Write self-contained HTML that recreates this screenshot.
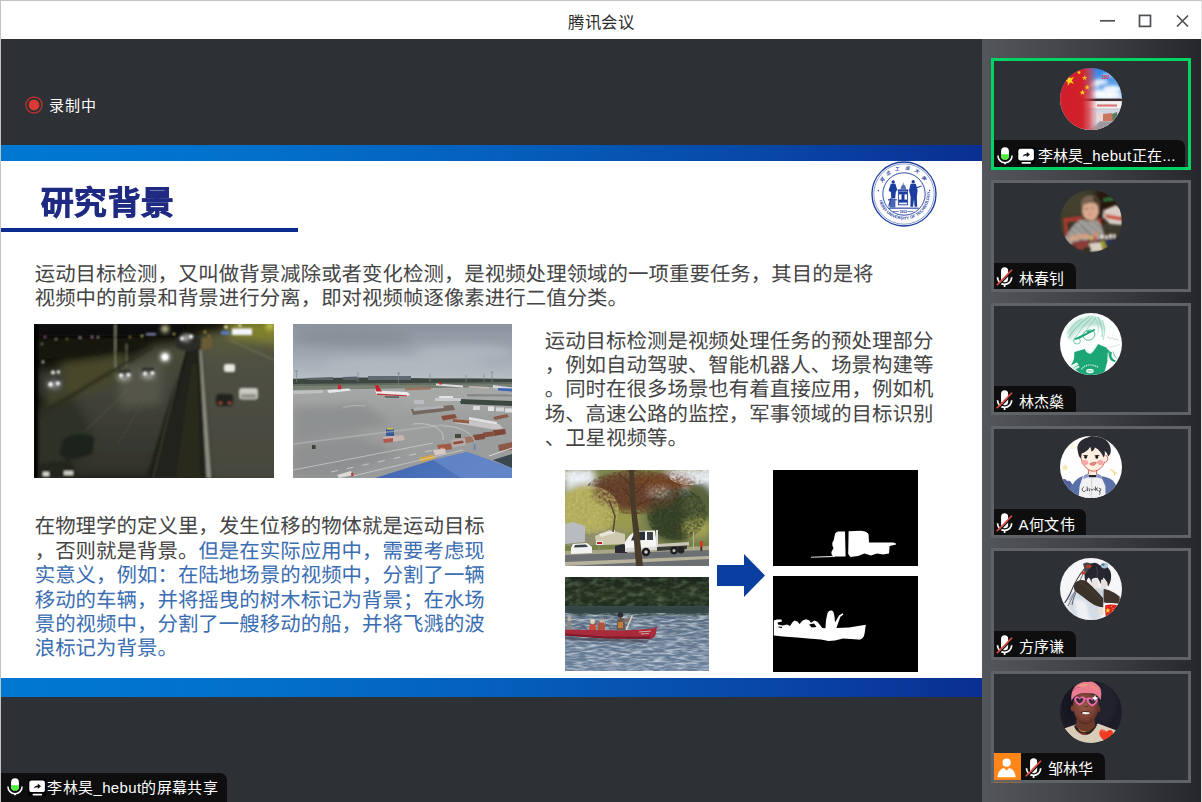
<!DOCTYPE html>
<html lang="zh-CN">
<head>
<meta charset="utf-8">
<title>腾讯会议</title>
<style>
*{margin:0;padding:0;box-sizing:border-box}
html,body{width:1202px;height:802px;overflow:hidden;background:#2d3034}
body{position:relative;font-family:"Liberation Sans",sans-serif;color:#fff}
.abs{position:absolute}
#frame{left:0;top:0;width:1202px;height:802px;border-left:1px solid #c3c3c3;border-top:1px solid #c3c3c3;border-right:1px solid #e4e4e4;pointer-events:none;z-index:50}
#titlebar{left:1px;top:1px;width:1200px;height:38px;background:#fff}
#title{left:0;top:1px;width:1200px;height:38px;line-height:41px;text-align:center;font-size:16.4px;letter-spacing:0.5px;color:#2b2b2b;text-indent:0}
#main{left:1px;top:39px;width:981px;height:763px;background:#2d3034}
#rec{left:49px;top:97px;font-size:15px;letter-spacing:0.9px;line-height:18px;color:#fff;white-space:nowrap}
#slide{left:1px;top:145px;width:981px;height:552px;background:#fff;overflow:hidden}
.bar{left:0;width:981px;background:linear-gradient(90deg,#0078d2 0%,#0271cc 25%,#0560bd 50%,#084aa9 75%,#0a2f92 100%)}
#h1{left:40px;top:38.5px;transform:scaleX(1.037);transform-origin:0 0;font-size:31.4px;letter-spacing:1.3px;line-height:40px;font-weight:bold;-webkit-text-stroke:0.8px #1f2a83;color:#1f2a83;white-space:nowrap;font-family:"Liberation Sans",sans-serif}
#h1line{left:0;top:83px;width:297px;height:4.3px;background:#0b2c8e}
.p{font-family:"Liberation Serif",serif;font-size:20.4px;letter-spacing:0.07px;line-height:24.45px;color:#444;white-space:nowrap;text-rendering:geometricPrecision}
.p div{height:24.45px}
.blue{color:#3a6db2}
#side{left:982px;top:39px;width:219px;height:763px;background:linear-gradient(90deg,#53565b 0%,#3e4044 50%,#26272a 100%)}
.tile{left:9px;width:200px;height:112px;background:#2d3034;border:3px solid #5f6368}
.tile.on{border-color:#02d365}
.av{left:66px;top:7px;width:62px;height:62px;border-radius:50%;overflow:hidden}
.av svg{display:block}
.lab{left:0;bottom:0;height:26.5px;background:#0e0e0f;border-top-right-radius:7px;font-size:15px;letter-spacing:0.35px;line-height:27px;white-space:nowrap;color:#fff}
.lab span{top:2px}
</style>
</head>
<body>
<svg width="0" height="0" style="position:absolute">
  <defs>
    <symbol id="micoff" viewBox="0 0 16 20">
      <rect x="4.7" y="0.3" width="6.6" height="14" rx="3.3" fill="#fff"/>
      <path d="M1.4 9.6A6.6 6.6 0 0 0 14.6 9.6" fill="none" stroke="#fff" stroke-width="1.6"/>
      <path d="M8 16.2V18.6" stroke="#fff" stroke-width="1.6"/>
      <path d="M1.7 17.9L15.6 3.4" stroke="#0e0e0f" stroke-width="1.3"/>
      <path d="M0.7 17L14.9 2.6" stroke="#ec4a41" stroke-width="1.5"/>
    </symbol>
    <symbol id="micon" viewBox="0 0 16 18">
      <rect x="4.1" y="0.2" width="7.8" height="12.4" rx="3.9" fill="#fff"/>
      <path d="M4.1 7.3H11.9V8.7A3.9 3.9 0 0 1 4.1 8.7Z" fill="#4cf03c"/>
      <path d="M0.9 8.6A7.1 7.1 0 0 0 15.1 8.6" fill="none" stroke="#fff" stroke-width="1.5"/>
      <path d="M8 15.6V17.3" stroke="#fff" stroke-width="1.7"/>
    </symbol>
    <symbol id="share" viewBox="0 0 18 17">
      <rect x="0" y="0" width="18" height="17" fill="#000"/>
      <rect x="1.3" y="1.4" width="15.6" height="11.7" rx="2.2" fill="#fff"/>
      <rect x="4.6" y="14.8" width="9.4" height="1.6" rx="0.6" fill="#fff"/>
      <path d="M5.6 9.4C6.3 7.3 7.8 6.4 9.8 6.4V4.6L13 7.3L9.8 10V8.2C8.3 8.1 6.9 8.4 5.6 9.4Z" fill="#111"/>
    </symbol>
    <symbol id="host" viewBox="0 0 27 27">
      <circle cx="12.6" cy="9.7" r="4.1" fill="#fff"/>
      <path d="M3.5 24.2C3.7 19 6.5 15.6 10 14.9L12.6 17.6L15.2 14.9C18.7 15.6 21.5 19 21.7 24.2Z" fill="#fff"/>
    </symbol>
  </defs>
</svg>
<div id="titlebar" class="abs">
  <div id="title" class="abs">腾讯会议</div>
  <svg class="abs" style="left:1099px;top:11px" width="92" height="16" viewBox="0 0 92 16">
    <g stroke="#4d5055" stroke-width="1.7" fill="none">
      <path d="M0 8.8H15"/>
      <rect x="39.5" y="3.4" width="11" height="11"/>
      <path d="M77 3.5L88 14.5M88 3.5L77 14.5"/>
    </g>
  </svg>
</div>

<div id="main" class="abs"></div>
<svg class="abs" style="left:24px;top:95px" width="20" height="20" viewBox="0 0 20 20">
  <circle cx="10" cy="10" r="8.1" fill="none" stroke="#b03230" stroke-width="1.5"/>
  <circle cx="10" cy="10" r="5.4" fill="#da3a34"/>
</svg>
<div id="rec" class="abs">录制中</div>

<div id="slide" class="abs">
  <div class="bar abs" style="top:0;height:16px"></div>
  <div class="bar abs" style="top:533px;height:19px"></div>
  <div id="h1" class="abs">研究背景</div>
  <div id="h1line" class="abs"></div>

  <div class="p abs" id="p1" style="left:33.7px;top:117.5px">
    <div>运动目标检测，又叫做背景减除或者变化检测，是视频处理领域的一项重要任务，其目的是将</div>
    <div>视频中的前景和背景进行分离，即对视频帧逐像素进行二值分类。</div>
  </div>

  <div class="p abs" id="p2" style="left:543.7px;top:184.5px">
    <div>运动目标检测是视频处理任务的预处理部分</div>
    <div>，例如自动驾驶、智能机器人、场景构建等</div>
    <div>。同时在很多场景也有着直接应用，例如机</div>
    <div>场、高速公路的监控，军事领域的目标识别</div>
    <div>、卫星视频等。</div>
  </div>

  <div class="p abs" id="p3" style="left:33.7px;top:370.3px">
    <div>在物理学的定义里，发生位移的物体就是运动目标</div>
    <div>，否则就是背景。<span class="blue">但是在实际应用中，需要考虑现</span></div>
    <div class="blue">实意义，例如：在陆地场景的视频中，分割了一辆</div>
    <div class="blue">移动的车辆，并将摇曳的树木标记为背景；在水场</div>
    <div class="blue">景的视频中，分割了一艘移动的船，并将飞溅的波</div>
    <div class="blue">浪标记为背景。</div>
  </div>

  <!-- IMAGES -->
  <div id="img1" class="abs" style="left:33px;top:179px;width:240px;height:154px;background:#3f4036;overflow:hidden"><!--@img1--><svg width="240" height="154" viewBox="0 0 240 154" style="display:block">
  <defs>
    <filter id="i1a" x="-10%" y="-10%" width="120%" height="120%"><feGaussianBlur stdDeviation="5"/></filter>
    <filter id="i1b" x="-10%" y="-10%" width="120%" height="120%"><feGaussianBlur stdDeviation="1.3"/></filter>
    <filter id="i1c" x="-30%" y="-30%" width="160%" height="160%"><feGaussianBlur stdDeviation="2.4"/></filter>
    <linearGradient id="i1r" x1="0" y1="0" x2="0" y2="1"><stop offset="0" stop-color="#4a4b38"/><stop offset="0.35" stop-color="#43443a"/><stop offset="1" stop-color="#30312a"/></linearGradient>
    <linearGradient id="i1rr" x1="0" y1="0" x2="0" y2="1"><stop offset="0" stop-color="#5e5f36"/><stop offset="0.25" stop-color="#4f5043"/><stop offset="1" stop-color="#45463c"/></linearGradient>
  </defs>
  <rect width="240" height="154" fill="#111109"/>
  <!-- large soft zones -->
  <g filter="url(#i1a)">
    <path d="M120 20L168 16L178 154L0 154L0 92Z" fill="url(#i1r)"/>
    <path d="M164 10L250 -4L250 160L176 160Z" fill="url(#i1rr)"/>
    <path d="M192 -6L250 -6L250 20L196 14Z" fill="#80802f"/>
    <path d="M26 38L92 28L96 52L40 74L8 84Z" fill="#46462a"/>
    <path d="M0 86L40 70L60 110L40 160L0 160Z" fill="#2f3028"/>
    <path d="M84 44L130 36L126 80L86 84Z" fill="#55564a"/>
    <path d="M4 46L30 44L30 66L4 74Z" fill="#3a3c34"/>
  </g>
  <g filter="url(#i1b)">
    <!-- sky band -->
    <rect x="0" y="0" width="150" height="12" fill="#090907"/>
    <path d="M0 16L110 14L112 22L60 30L0 36Z" fill="#191910" opacity="0.9"/>
    <!-- median -->
    <path d="M152 24L166 22L177 154L112 154Z" fill="#23231b"/>
    <path d="M158 40L163 40L166 154L142 154Z" fill="#2b2a1b"/>
    <path d="M151 28L153.4 28L121 154L116 154Z" fill="#15150f"/>
    <path d="M165.4 26L167.6 26L177.4 154L172.6 154Z" fill="#8d8e80"/>
    <path d="M150 26L152 26L120 154L118 154Z" fill="#55564a" opacity="0.6"/>
    <!-- smoke -->
    <ellipse cx="154" cy="18" rx="13" ry="9" fill="#2b2b25"/>
    <!-- lamp pole -->
    <path d="M80.6 0H82V44H80.6Z" fill="#8b8c78"/>
    <path d="M92 20H93V42H92Z" fill="#77775f"/>
    <!-- left road edges -->
    <path d="M117 22L4 90L4 94L119 24Z" fill="#2a2b22" opacity="0.8"/>
    <path d="M100 60L50 108" stroke="#6a6b5c" stroke-width="0.8" opacity="0.7"/>
    <path d="M124 52L84 120" stroke="#6a6b5c" stroke-width="0.7" opacity="0.5"/>
    <!-- cars dark bottom-left -->
    <path d="M28 118C34 110 52 108 60 114L58 130L34 136L26 130Z" fill="#1f201b"/>
    <path d="M4 140L36 136L44 154L2 154Z" fill="#24251f"/>
    <rect x="9" y="148" width="6" height="4" fill="#d8d8d0"/><rect x="30" y="147" width="9" height="4" fill="#cfcfc6"/>
    <!-- right road cars -->
    <rect x="190" y="40" width="11" height="8" rx="2" fill="#e9e9e2"/>
    <rect x="182" y="70" width="17" height="12" rx="4" fill="#22221d"/>
    <rect x="205" y="64" width="19" height="11.5" rx="3" fill="#c9c9c0"/>
    <rect x="207" y="70" width="15" height="4" fill="#8f8f86"/>
    <rect x="185" y="78" width="3" height="2" fill="#a05040"/><rect x="194" y="78" width="3" height="2" fill="#a05040"/>
    <!-- billboards -->
    <rect x="198" y="4.5" width="20" height="6.5" fill="#f4f6ff"/>
    <rect x="187" y="7" width="9" height="3.6" fill="#5a78c8"/>
    <!-- top-right road lines -->
    <path d="M196 16L240 36" stroke="#7d7e60" stroke-width="1.2" opacity="0.8"/>
    <path d="M168 14L178 14L178 24L168 26Z" fill="#6a5c36"/>
    <!-- left cars bodies -->
    <rect x="84" y="46" width="12" height="7" rx="2" fill="#1c1c18"/>
    <rect x="108" y="44" width="12" height="7" rx="2" fill="#1c1c18"/>
    <rect x="14" y="54" width="12" height="8" rx="2" fill="#1a1a1a"/>
  </g>
  <!-- lights -->
  <g filter="url(#i1c)" fill="#fff">
    <circle cx="131" cy="33" r="4.6"/><circle cx="131" cy="5" r="3.4" fill="#f8f8c0"/>
    <circle cx="152" cy="14" r="3.4" opacity="0.8"/>
    <circle cx="236" cy="2" r="4" fill="#c8c850"/>
    <ellipse cx="90" cy="53" rx="7" ry="4" opacity="0.45"/><ellipse cx="114" cy="51" rx="7" ry="4" opacity="0.45"/>
    <ellipse cx="20" cy="60" rx="7" ry="5" opacity="0.4"/>
  </g>
  <filter id="i1d" x="-50%" y="-50%" width="200%" height="200%"><feGaussianBlur stdDeviation="0.9"/></filter>
  <g filter="url(#i1d)" fill="#fff">
    <circle cx="87" cy="51.4" r="2.1"/><circle cx="94.4" cy="50.8" r="2.1"/>
    <circle cx="111" cy="49.6" r="2.1"/><circle cx="118.4" cy="49" r="2.1"/>
    <circle cx="16.6" cy="60.4" r="2.3"/><circle cx="24" cy="59.4" r="2.1"/>
    <circle cx="19" cy="48.4" r="1.9"/><circle cx="24.4" cy="48" r="1.7"/>
    <circle cx="131" cy="33" r="3"/>
    <circle cx="148" cy="14.6" r="2"/><circle cx="157" cy="12.6" r="2.2"/>
    <circle cx="192" cy="3" r="1.8" fill="#ffffc8"/><circle cx="206" cy="1.6" r="1.4" fill="#ffffc8"/>
    <circle cx="9" cy="38" r="1.4" opacity="0.8"/>
  </g>
  <g filter="url(#i1b)">
    <circle cx="11" cy="13" r="1.2" fill="#c060c0"/><circle cx="22" cy="15" r="1" fill="#e8e8e8"/><circle cx="33" cy="15" r="1" fill="#c8a060"/>
    <circle cx="46" cy="13.6" r="1.2" fill="#e0e0ff"/><circle cx="58" cy="13" r="1.2" fill="#d0a0e0"/><circle cx="64" cy="13.2" r="1" fill="#fff"/>
    <circle cx="96" cy="13" r="1" fill="#e0c060"/><circle cx="108" cy="12" r="1.2" fill="#e8e8a0"/><rect x="112" y="9.4" width="10" height="1.8" fill="#a0a8e0"/>
    <circle cx="8" cy="20" r="1" fill="#c0c0c0"/><circle cx="140" cy="10" r="1.2" fill="#e8d060"/><circle cx="171" cy="8" r="1.2" fill="#e8b050"/><circle cx="175" cy="12" r="1" fill="#e0a040"/>
    <rect x="0" y="0" width="3.6" height="154" fill="#050504"/>
  </g>
</svg><!--/@img1--></div>
  <div id="img2" class="abs" style="left:292px;top:179px;width:219px;height:154px;background:#9a9c9c;overflow:hidden"><!--@img2--><svg width="219" height="154" viewBox="0 0 219 154" style="display:block">
  <defs>
    <filter id="i2a" x="-10%" y="-10%" width="120%" height="120%"><feGaussianBlur stdDeviation="4"/></filter>
    <filter id="i2b" x="-10%" y="-10%" width="120%" height="120%"><feGaussianBlur stdDeviation="0.7"/></filter>
    <linearGradient id="i2s" x1="0" y1="0" x2="0" y2="1"><stop offset="0" stop-color="#8a939e"/><stop offset="0.45" stop-color="#9aa3ad"/><stop offset="0.85" stop-color="#afb7bf"/><stop offset="1" stop-color="#b9c0c7"/></linearGradient>
    <linearGradient id="i2g" x1="0" y1="0" x2="0" y2="1"><stop offset="0" stop-color="#a9abaa"/><stop offset="0.4" stop-color="#9d9f9f"/><stop offset="1" stop-color="#989a9b"/></linearGradient>
    <linearGradient id="i2r" x1="0" y1="0" x2="1" y2="0.3"><stop offset="0" stop-color="#3f63b0"/><stop offset="1" stop-color="#5378bf"/></linearGradient>
  </defs>
  <rect width="219" height="56" fill="url(#i2s)"/>
  <rect y="54" width="219" height="100" fill="url(#i2g)"/>
  <g filter="url(#i2a)">
    <ellipse cx="60" cy="14" rx="60" ry="8" fill="#808891" opacity="0.6"/>
    <ellipse cx="170" cy="28" rx="50" ry="7" fill="#b5bcc4" opacity="0.7"/>
    <ellipse cx="110" cy="40" rx="80" ry="6" fill="#bac0c7" opacity="0.6"/>
    <path d="M0 84L70 80L100 100L0 118Z" fill="#8e9191"/>
    <path d="M0 122L60 112L110 130L40 154L0 154Z" fill="#8e9091"/>
    <path d="M100 66L219 64L219 80L120 84Z" fill="#a6a8a6"/>
  </g>
  <g filter="url(#i2b)">
    <!-- horizon -->
    <path d="M0 55L30 54L60 53.4L100 53.8L140 54.6L180 54.4L219 55L219 60L0 62Z" fill="#3d4642"/>
    <path d="M14 54L40 53L40 56L14 56Z" fill="#5d6668"/>
    <path d="M50 53L64 52.4L64 56L50 56Z" fill="#59626a"/>
    <path d="M75 52L118 52L118 56L75 56Z" fill="#606a74"/>
    <path d="M0 60L219 58L219 63L140 64L0 66Z" fill="#6d7568" opacity="0.8"/>
    <!-- lamp posts -->
    <g stroke="#7d848a" stroke-width="0.7"><path d="M3.4 47V58"/><path d="M65 48V58"/><path d="M105.6 49V64"/><path d="M137 50V58"/><path d="M173 51V58"/><path d="M191 50V58"/><path d="M199 48V58"/></g>
    <rect x="2" y="46.4" width="3" height="1.4" fill="#8a9096"/><rect x="104" y="48.6" width="3.2" height="1.2" fill="#8a9096"/><rect x="197.6" y="47.6" width="3" height="1.2" fill="#8a9096"/>
    <!-- planes -->
    <path d="M34 66L56 64.4L58 66.4L36 69Z" fill="#e6e7e8"/>
    <path d="M45 60.6L47.4 60.6L48.6 65L45 65.6Z" fill="#c7262c"/>
    <path d="M82 66.6L114 68L117 70.4L114 72.4L84 71Z" fill="#ececed"/>
    <path d="M84 69.6L114 71.2L114 72.4L84 71Z" fill="#b83a3a"/>
    <path d="M82 61L85 61L89 67.4L83.4 67.4Z" fill="#c9242b"/>
    <path d="M92 72L106 72.6L106 74L92 73.4Z" fill="#55585c"/>
    <path d="M143 59.6L170 61.6L170 63.4L143 61.4Z" fill="#dcdde0"/>
    <path d="M146 58L148 58L149.4 60.6L146.4 60.6Z" fill="#c9242b"/>
    <path d="M176 62L196 63L196 64.6L176 63.6Z" fill="#c9b8b8"/>
    <path d="M200 61L219 63.4L219 66L200 64Z" fill="#d5d6da"/>
    <path d="M205 64L219 64.6L219 67.4L205 66.6Z" fill="#3d68b8"/>
    <path d="M0 67L30 66L30 69L0 70Z" fill="#c5c6c6" opacity="0.8"/>
    <path d="M112 64L138 63L138 65.6L112 66.6Z" fill="#9a6d55" opacity="0.8"/>
    <!-- hedge right -->
    <path d="M166 75L219 77L219 82L168 80Z" fill="#3a4a40"/>
    <path d="M174 70L219 70.6L219 72.6L174 72.6Z" fill="#77797c" opacity="0.7"/>
    <!-- vehicles rows -->
    <path d="M118 85L160 81L162 86L120 91Z" fill="#74695f"/>
    <path d="M120 84L150 81.4L151 84L121 87Z" fill="#aeb2b6"/>
    <path d="M148 92L162 90L164 94L150 96.4Z" fill="#8b4e3a"/>
    <path d="M160 95L206 100L210 104L204 106L162 99Z" fill="#c9c5c6"/>
    <path d="M176 93L204 98L204 100.4L176 96Z" fill="#e2e0e2"/>
    <path d="M160 95L176 96.6L176 99.6L160 98Z" fill="#8f5a40"/>
    <path d="M142 74L168 74L168 77L142 77Z" fill="#c9cbcd"/>
    <path d="M121 76L131 76L131 80L121 80Z" fill="#b9bcbf"/>
    <path d="M146 72L160 72L160 74L146 74Z" fill="#e0e1e2"/>
    <rect x="180" y="82" width="7" height="4" fill="#d6d7d8"/><rect x="195" y="82.4" width="6" height="4.6" fill="#e3e4e5"/><rect x="203" y="83.4" width="8" height="4" fill="#d3d5d7"/><rect x="212" y="84.4" width="7" height="4" fill="#dcdde0"/>
    <path d="M200 93L214 90L216 93L202 96Z" fill="#8a5b48"/>
    <!-- bottom vehicles train -->
    <path d="M200 106L212 105L213 110L201 112Z" fill="#7e4636"/>
    <path d="M190 108.6L200 107.6L201 112L191 113.6Z" fill="#84503c"/>
    <path d="M180 111L191 109.6L192 115L181 116.6Z" fill="#7b4a3a"/>
    <path d="M170 113.6L181 112L182 117.6L171 119.6Z" fill="#9a7462"/>
    <path d="M158 116L172 114L173 121L160 123.6Z" fill="#b9aaa6"/>
    <path d="M160 118L170 116.6L170.6 119L160.6 120.6Z" fill="#8b4e3e"/>
    <path d="M144 121L158 119.6L159 125L146 127Z" fill="#a05a44"/>
    <path d="M140 126L152 124.6L153 129.6L142 131.6Z" fill="#d9c9c4"/>
    <path d="M126 134L140 130.6L142 134.6L128 138Z" fill="#d9a53a"/>
    <path d="M205 121L219 118L219 126L206 127Z" fill="#8c5a48"/>
    <path d="M162 110L168 110L168 114L162 114Z" fill="#4a4a3a"/>
    <rect x="180.6" y="120" width="2" height="6" fill="#6b86b8"/>
    <!-- center tug -->
    <rect x="93" y="105" width="8" height="7" fill="#3a5a9a"/>
    <rect x="94" y="104" width="6" height="1.6" fill="#c9c23a"/>
    <path d="M90 113L110 111L112 116L92 119Z" fill="#c9b5b0"/>
    <path d="M90 115L100 114L100 118L91 119Z" fill="#b05a50"/>
    <rect x="19" y="121" width="3.6" height="4" fill="#3e4034"/>
    <!-- markings -->
    <g fill="none" stroke="#d4d6d6" stroke-width="0.8" opacity="0.85">
      <path d="M0 146L140 119"/>
      <path d="M60 152L170 126"/>
      <path d="M0 120L150 101" stroke="#bfc1c1" stroke-width="1.6" opacity="0.6"/>
      <path d="M50 84C54 82 62 81 72 82" opacity="0.7"/>
      <path d="M120 100C140 98 152 106 150 116" />
      <path d="M150 102C168 102 180 110 182 118"/>
    </g>
    <g stroke="#d9dbdb" stroke-width="0.9" stroke-dasharray="7 9" opacity="0.8"><path d="M38 148L150 124"/></g>
    <path d="M44 151L58 147L60 151L46 154Z" fill="#dcdad6"/><path d="M58 149L60 148.6L60.6 152L58.6 152.6Z" fill="#c0382c"/>
    <!-- blue roof -->
    <path d="M82 154L140 136L174 128L219 144L219 154Z" fill="url(#i2r)"/>
    <path d="M140 136L174 128L219 144L219 154L168 154Z" fill="#6b8cca" opacity="0.7"/>
    <path d="M200 136L219 130L219 144Z" fill="#3b4650"/>
    <path d="M196 132L219 124" stroke="#d9dadb" stroke-width="1"/>
  </g>
</svg><!--/@img2--></div>
  <div id="img3" class="abs" style="left:564px;top:325px;width:144px;height:96px;background:#6d7448;overflow:hidden"><!--@img3--><svg width="144" height="96" viewBox="0 0 144 96" style="display:block">
  <defs>
    <filter id="i3a" x="-10%" y="-10%" width="120%" height="120%"><feGaussianBlur stdDeviation="3"/></filter>
    <filter id="i3b" x="-10%" y="-10%" width="120%" height="120%"><feGaussianBlur stdDeviation="0.6"/></filter>
    <filter id="i3n" x="0" y="0" width="100%" height="100%"><feTurbulence type="fractalNoise" baseFrequency="0.35" numOctaves="2" seed="3"/><feColorMatrix values="0 0 0 0 0  0 0 0 0 0  0 0 0 0 0  0.9 0.9 0 0 -0.55"/><feComposite in="SourceGraphic" operator="in"/></filter>
  </defs>
  <rect width="144" height="96" fill="#7d8450"/>
  <g filter="url(#i3a)">
    <rect x="0" y="0" width="30" height="22" fill="#e4e8ee"/><rect x="100" y="0" width="50" height="24" fill="#dfe4ea"/>
    <ellipse cx="22" cy="40" rx="30" ry="26" fill="#a9a659"/>
    <ellipse cx="56" cy="50" rx="18" ry="16" fill="#9a9a50"/>
    <ellipse cx="110" cy="46" rx="26" ry="26" fill="#3e4a2c"/>
    <ellipse cx="134" cy="34" rx="16" ry="22" fill="#58643a"/>
    <ellipse cx="70" cy="22" rx="44" ry="18" fill="#6b4a30"/>
    <ellipse cx="100" cy="12" rx="30" ry="9" fill="#7d4f2c"/>
    <rect x="0" y="60" width="60" height="20" fill="#8f8e6c"/>
    <ellipse cx="132" cy="58" rx="14" ry="10" fill="#a3a255"/><ellipse cx="94" cy="22" rx="12" ry="4" fill="#d9d6cf" opacity="0.7"/>
  </g>
  <g filter="url(#i3n)">
    <ellipse cx="70" cy="22" rx="50" ry="22" fill="#5a2f1c"/>
    <ellipse cx="24" cy="40" rx="30" ry="24" fill="#c9c26a"/>
    <ellipse cx="112" cy="44" rx="30" ry="26" fill="#2a3420"/>
    <ellipse cx="10" cy="4" rx="16" ry="8" fill="#f4f6fa"/><ellipse cx="126" cy="6" rx="22" ry="9" fill="#f4f6fa"/>
  </g>
  <g filter="url(#i3b)">
    <!-- house left -->
    <path d="M0 54L8 52L20 56L20 72L0 74Z" fill="#b8bcc0"/>
    <path d="M30 66L44 60L60 64L60 76L32 78Z" fill="#cfc9b0"/>
    <path d="M34 64L50 60L50 63L36 67Z" fill="#e8e6da"/>
    <!-- road -->
    <path d="M0 82L144 78L144 96L0 96Z" fill="#6d6f72"/>
    <path d="M0 80L144 76L144 80L0 85Z" fill="#a9a68a"/>
    <path d="M0 92L144 86L144 89L0 96Z" fill="#c9c3a6" opacity="0.8"/>
    <path d="M0 76L144 72L144 76L0 81Z" fill="#77804a"/>
    <!-- white car -->
    <path d="M6 78L8 74L22 73L27 77L27 83L6 84Z" fill="#f2f2f2"/>
    <path d="M10 75L21 74.4L23 77L9 77.6Z" fill="#3a3f48"/>
    <!-- dark car -->
    <path d="M50 76L58 74L62 76L62 83L50 83Z" fill="#2a2c32"/>
    <!-- sign -->
    <rect x="31" y="71" width="7" height="4" fill="#e9e4e0"/><rect x="32" y="72" width="5" height="2" fill="#b8282a"/><rect x="33.6" y="75" width="0.8" height="7" fill="#9a9a90"/>
    <!-- truck -->
    <path d="M64 66L70 61L90 60.6L92 78L60 80L60 72Z" fill="#f5f5f3"/>
    <path d="M70 62L80 61.6L80 70L66 70.6Z" fill="#2c3138"/>
    <path d="M82 62L88 62L88 70L82 70Z" fill="#3a4048"/>
    <path d="M60 78L92 76.6L92 80L60 82Z" fill="#d9d9d6"/>
    <path d="M92 74L124 72L124 75.4L92 77.6Z" fill="#c9c6b8"/>
    <path d="M92 77L122 75.4L122 79L92 81Z" fill="#3a3a38"/>
    <rect x="91" y="60" width="2" height="17" fill="#dcdcd8"/>
    <circle cx="81" cy="82" r="4.2" fill="#1c1c1e"/><circle cx="81" cy="82" r="1.8" fill="#c9c9c9"/>
    <circle cx="109" cy="80.6" r="3.8" fill="#1c1c1e"/><circle cx="109" cy="80.6" r="1.6" fill="#bdbdbd"/>
    <circle cx="116" cy="80" r="3.4" fill="#222224"/>
    <!-- person in red -->
    <rect x="135" y="71" width="2.6" height="6" fill="#d8341c"/><rect x="135.4" y="77" width="1.8" height="4" fill="#3a2c2c"/>
    <rect x="128" y="62" width="0.9" height="18" fill="#b9b9a8"/>
    <!-- foreground tree trunk -->
    <path d="M64 0L69 0L70 30L74 60L78 96L71 96L68 60L65 30Z" fill="#4a3a2c"/>
    <path d="M68 30L58 18M69 24L84 10M68 16L54 4M70 36L90 28" stroke="#4a3426" stroke-width="1" fill="none"/>
    <path d="M44 30L50 46L48 62" stroke="#5a4a34" stroke-width="1.6" fill="none"/>
  </g>
</svg><!--/@img3--></div>
  <div id="img4" class="abs" style="left:564px;top:432px;width:144px;height:94px;background:#5a6f86;overflow:hidden"><!--@img4--><svg width="144" height="94" viewBox="0 0 144 94" style="display:block">
  <defs>
    <filter id="i4a" x="-10%" y="-10%" width="120%" height="120%"><feGaussianBlur stdDeviation="2.4"/></filter>
    <filter id="i4b" x="-10%" y="-10%" width="120%" height="120%"><feGaussianBlur stdDeviation="0.55"/></filter>
    <filter id="i4w" x="0" y="0" width="100%" height="100%"><feTurbulence type="fractalNoise" baseFrequency="0.09 0.5" numOctaves="2" seed="7"/><feColorMatrix values="0 0 0 0 0.86  0 0 0 0 0.9  0 0 0 0 0.96  1.6 0 0 0 -0.62"/><feComposite in2="SourceGraphic" operator="in"/></filter>
    <filter id="i4t" x="0" y="0" width="100%" height="100%"><feTurbulence type="fractalNoise" baseFrequency="0.12 0.2" numOctaves="2" seed="11"/><feColorMatrix values="0 0 0 0 0.2  0 0 0 0 0.28  0 0 0 0 0.17  1.1 0 0 0 -0.45"/><feComposite in2="SourceGraphic" operator="in"/></filter>
    <linearGradient id="i4g" x1="0" y1="0" x2="0" y2="1"><stop offset="0" stop-color="#1c261c"/><stop offset="0.6" stop-color="#26341f"/><stop offset="1" stop-color="#1d2b1c"/></linearGradient>
    <linearGradient id="i4h" x1="0" y1="0" x2="0" y2="1"><stop offset="0" stop-color="#3c4c50"/><stop offset="0.2" stop-color="#5b6f84"/><stop offset="1" stop-color="#6b819b"/></linearGradient>
  </defs>
  <rect width="144" height="30" fill="url(#i4g)"/>
  <rect y="0" width="144" height="30" fill="#000" filter="url(#i4t)"/>
  <rect y="29" width="144" height="65" fill="url(#i4h)"/>
  <rect y="30" width="144" height="8" fill="#2c3a36" opacity="0.75" filter="url(#i4a)"/>
  <rect y="36" width="144" height="58" fill="#000" filter="url(#i4w)"/>
  <g filter="url(#i4b)">
    <!-- canoe -->
    <path d="M0 52.6L60 53.4L88 51.4L92 49.6L91 56C90 60 88 62 84 62L40 61.6L0 58.6Z" fill="#a82a3a"/>
    <path d="M0 56.6L40 59.4L86 59.6L84 62L40 61.6L0 58.6Z" fill="#7b1c2a"/>
    <path d="M74 55L86 54M76 57L84 56.4" stroke="#e6c9cc" stroke-width="0.8"/>
    <!-- paddlers -->
    <path d="M52 44C52 40 60 40 60 44L60.6 53L51.4 53Z" fill="#6b5a50"/>
    <circle cx="55.4" cy="38" r="2.8" fill="#2f2a2a"/>
    <path d="M58 44L66 40L66.8 41.4L59 46Z" fill="#8b6a58"/>
    <path d="M66.6 38L68 38.4L62 53L60.6 52.6Z" fill="#d9d4c4"/>
    <path d="M53 45L58 45L58 51L53 51Z" fill="#c07a3a"/>
    <path d="M33 47C33 44 39 44 39.6 47L40 53L32.6 53Z" fill="#b0523a"/>
    <circle cx="36.6" cy="43.4" r="2.3" fill="#c9b8a4"/>
    <path d="M33.6 42.6L39.6 42.4L38.6 40.6L35 40.6Z" fill="#7d8690"/>
    <path d="M24.6 48.6C25 46 30 46 30.6 48.6L31 53L24 53Z" fill="#c9483a"/>
    <circle cx="27.6" cy="45" r="2.3" fill="#e0c9a4"/>
    <path d="M24.6 44.4L30.8 44.2L29.4 42.4L26 42.4Z" fill="#e9dfc4"/>
    <path d="M2 45C2.6 43 6 43 6.6 45L7 52.6L1.6 52.6Z" fill="#8a8a86"/>
    <circle cx="4.2" cy="42" r="2" fill="#c4b4a0"/>
    <path d="M40 46L46 52" stroke="#4a3a30" stroke-width="0.7"/>
    <path d="M18 49L22 52.6" stroke="#4a4a4a" stroke-width="0.7"/>
    <!-- reflection -->
    <path d="M0 60L84 63L82 66L0 63Z" fill="#3c3848" opacity="0.55"/>
  </g>
</svg><!--/@img4--></div>
  <div id="img5" class="abs" style="left:772px;top:325px;width:145px;height:96px;background:#000;overflow:hidden"><!--@img5--><svg width="145" height="96" viewBox="0 0 145 96" style="display:block">
  <rect width="145" height="96" fill="#000"/>
  <g fill="#fff">
    <path d="M62 64C63 61.6 65.4 61.4 67 61.6L72 61.6L72.6 86.4L62 86.6C59.6 86.6 58 84.6 58.4 82L60.6 78C58.8 76 59 72 60.6 70.6Z"/>
    <path d="M75.6 61.2L88 60.8C92 61.2 95.4 62.6 95.6 65L96 72.6L118 72.4C121 72.4 123.4 73 123 74.4L116.6 76L116 83.6L110 84.6L104 83.4L98 85.6L91.4 83.6L85 86L77.4 87L75.2 84Z"/>
    <path d="M38 86.8L62 85.8L62 87L38 87.8Z" opacity="0.85"/>
  </g>
</svg><!--/@img5--></div>
  <div id="img6" class="abs" style="left:772px;top:431px;width:145px;height:96px;background:#000;overflow:hidden"><!--@img6--><svg width="145" height="96" viewBox="0 0 145 96" style="display:block">
  <rect width="145" height="96" fill="#000"/>
  <g fill="#fff">
    <path d="M0.8 44.6L4 43.4L8.4 43.6L9 45.4L4.6 46.6L5 48.6L9.6 49.4L14 48.4L17 50L19.6 46L21.6 44.6L24.4 45.6L26.6 48L29.6 44.6L33 43.2L36.4 44.4L38 46.8L41.6 44.6L44.6 46L49.4 52L52.4 52.2L53 44L54.4 37.6C55.4 34 59.6 33.6 60.6 36.4L61.6 41L62 46.4L66 39.4L69.6 37.2L70.4 38.4L67.4 40.8L63.4 52L76 51.4L92.8 48.8L91.6 57.6C90.8 62 88.6 64 85 63.6L70 62.4L62 64.6L55.6 65L48 63.4L38 62.8L24 61.6L10 60.4L0.8 59.6Z"/>
  </g>
  <g fill="#000">
    <path d="M36 48.6L41 47.4L43.6 51L38.6 51.4Z"/>
    <path d="M5.6 50.4L9 50.8L9 52L5.6 51.6Z"/>
  </g>
</svg><!--/@img6--></div>
  <svg id="arrow" class="abs" style="left:716px;top:409px" width="49" height="44" viewBox="0 0 49 44"><path d="M0 11H27V0L48 21.5L27 43V32H0Z" fill="#0a3fa0"/></svg>
  <!-- LOGO -->
  <!--@logo--><svg class="abs" style="left:870px;top:16.3px" width="66" height="66" viewBox="-33 -33 66 66">
  <g fill="none" stroke="#1c3da0">
    <circle r="32" stroke-width="1.3"/>
    <circle r="30.2" stroke-width="0.5"/>
    <circle r="21.2" stroke-width="0.9"/>
  </g>
  <path id="arcb" d="M-25 -5.5A25.6 25.6 0 1 0 25 -5.5" fill="none"/>
  <path id="arct" d="M-22.5 -8.5A24 24 0 0 1 22.5 -8.5" fill="none"/>
  <text font-family="Liberation Sans, sans-serif" font-size="4.1" font-weight="bold" fill="#1c3da0" letter-spacing="0.05"><textPath href="#arcb" startOffset="12">HEBEI UNIVERSITY OF TECHNOLOGY</textPath></text>
  <text font-family="Liberation Serif, serif" font-size="4.6" font-weight="bold" font-style="italic" fill="#1c3da0" letter-spacing="4.2"><textPath href="#arct" startOffset="2">河北工业大学</textPath></text>
  <circle cx="-25.6" cy="-3.5" r="0.7" fill="#1c3da0"/><circle cx="25.6" cy="-3.5" r="0.7" fill="#1c3da0"/>
  <g fill="#1c3da0">
    <!-- pedestal with 工 -->
    <rect x="-6.3" y="-4.6" width="10.6" height="1.2"/>
    <rect x="-5.6" y="-3.4" width="9.2" height="14.2" fill="none" stroke="#1c3da0" stroke-width="0.9"/>
    <rect x="-5.2" y="-2.6" width="8.4" height="3"/>
    <rect x="-2.5" y="0.2" width="3" height="6"/>
    <rect x="-5.2" y="5.6" width="8.4" height="3"/>
    <path d="M-3.4 -4.8C-3.2 -7.6 -2 -9 -1 -9.4L-1 -11.2L-0.4 -11.2L-0.4 -9.4C0.8 -9 2 -7.6 2.2 -4.8Z" opacity="0.75"/>
    <!-- left figure -->
    <circle cx="-10.8" cy="-12" r="1.7"/>
    <path d="M-13.2 -10.2L-8.6 -10.2L-6.8 -4.2L-8.2 -1.8L-8.8 4.4L-12.8 4.4L-13 -1.6L-15.4 -3.6Z"/>
    <path d="M-16 5L-7.2 5L-7.2 6.6L-8.6 6.6L-8.6 13.4L-14 13.4L-14 6.6L-16 6.6Z" opacity="0.8"/>
    <path d="M-13.6 4L-15.8 12.6L-14.6 12.8L-12.4 4Z"/>
    <!-- right figure -->
    <circle cx="9.2" cy="-12.2" r="1.7"/>
    <path d="M6.6 -10.3L11.8 -10.3L13.6 -3.4L12.8 3.2L13.2 12.8L10.6 12.8L10 5L9 12.8L6.4 12.8L6.6 2.4L5 -3.4Z"/>
    <path d="M12.2 -6.8L17.6 -8.6L17.8 -7.8L12.6 -5.6Z"/>
    <!-- base -->
    <rect x="-15" y="13.6" width="29.6" height="1.1"/>
    <rect x="-11" y="17.2" width="6" height="0.6"/><rect x="3.4" y="17.2" width="6" height="0.6"/>
  </g>
  <text x="-0.8" y="18.8" text-anchor="middle" font-family="Liberation Sans, sans-serif" font-size="3.4" font-weight="bold" fill="#1c3da0">1903</text>
</svg><!--/@logo-->
</div>

<div class="abs" id="sharebar" style="left:1px;top:773px;width:226px;height:29px;background:#0e0e0f;border-top-right-radius:7px;font-size:15px;line-height:30px;white-space:nowrap">
  <svg class="abs" style="left:6px;top:5.3px" width="16" height="18"><use href="#micon"/></svg><svg class="abs" style="left:26.5px;top:6.2px" width="18" height="17"><use href="#share"/></svg><span class="abs" style="left:46.4px;top:0;letter-spacing:0.35px">李林昊_hebut的屏幕共享</span>
</div>

<div id="side" class="abs">
  <div class="tile on abs" style="top:19px"><div class="av abs"><!--@av1--><svg width="62" height="62" viewBox="0 0 62 62">
  <defs>
    <linearGradient id="a1sky" x1="0" y1="0" x2="0" y2="1"><stop offset="0" stop-color="#2f7fe2"/><stop offset="0.3" stop-color="#6aa6ea"/><stop offset="0.52" stop-color="#dbe8f8"/><stop offset="1" stop-color="#e8eef6"/></linearGradient>
    <linearGradient id="a1red" x1="0" y1="0" x2="1" y2="0"><stop offset="0" stop-color="#cf1f2a"/><stop offset="0.36" stop-color="#d2212b"/><stop offset="0.47" stop-color="#d4323c" stop-opacity="0.75"/><stop offset="0.6" stop-color="#d84050" stop-opacity="0"/></linearGradient>
    <filter id="a1b"><feGaussianBlur stdDeviation="1.6"/></filter>
    <filter id="a1c"><feGaussianBlur stdDeviation="0.5"/></filter>
  </defs>
  <rect width="62" height="62" fill="url(#a1sky)"/>
  <g filter="url(#a1b)" fill="#fff"><ellipse cx="40" cy="14" rx="8" ry="3" opacity="0.75"/><ellipse cx="52" cy="21" rx="9" ry="3.5" opacity="0.85"/><ellipse cx="38" cy="24" rx="7" ry="2.6" opacity="0.7"/><ellipse cx="48" cy="7" rx="6" ry="2" opacity="0.5"/><ellipse cx="46" cy="27" rx="14" ry="3.4" opacity="0.9"/><ellipse cx="34" cy="17" rx="6" ry="3" opacity="0.6"/></g>
  <!-- gate -->
  <rect x="20" y="30.6" width="42" height="2.6" fill="#3b2b2b"/>
  <rect x="20" y="33.2" width="42" height="1.2" fill="#f3eeee"/>
  <rect x="20" y="34.4" width="42" height="6.2" fill="#f4f0f0"/>
  <rect x="37" y="36.4" width="20" height="2.2" fill="#d25a5a" opacity="0.8"/>
  <rect x="20" y="40.6" width="42" height="1" fill="#b9b4b8"/>
  <!-- under gate -->
  <rect x="20" y="41.6" width="42" height="21" fill="#cfd6e2"/>
  <g filter="url(#a1c)">
  <rect x="28" y="41.6" width="6" height="14" fill="#e9dfe0"/>
  <rect x="36" y="44" width="7" height="10" fill="#e4d8d8"/>
  <path d="M43 46L52 45L54 54L43 54Z" fill="#c9755d"/>
  <path d="M52 46L57 44L58 53L53 54Z" fill="#5b7a5a"/>
  <path d="M30 62L40 53L56 53L48 62Z" fill="#b5a9ad"/>
  <path d="M40 54L52 54L46 62L34 62Z" fill="#8f8a92" opacity="0.6"/>
  </g>
  <text x="41.5" y="11.4" font-family="Liberation Sans, sans-serif" font-size="4.6" font-weight="bold" font-style="italic" fill="#d8284a">100</text>
  <rect width="62" height="62" fill="url(#a1red)"/>
  <g fill="#f7d417">
    <path d="M9.3 6.8L10.6 10.7L14.7 10.7L11.4 13.2L12.6 17.1L9.3 14.7L6 17.1L7.2 13.2L3.9 10.7L8 10.7Z" transform="rotate(-18 9.3 12)"/>
    <path d="M19 2.2L19.6 3.8L21.3 3.8L19.9 4.9L20.4 6.5L19 5.5L17.6 6.5L18.1 4.9L16.7 3.8L18.4 3.8Z" opacity="0.9"/>
    <path d="M24.6 7L25.3 9L27.4 9L25.7 10.3L26.3 12.3L24.6 11.1L22.9 12.3L23.5 10.3L21.8 9L23.9 9Z" opacity="0.85"/>
    <path d="M27.2 16.4L27.9 18.4L30 18.4L28.3 19.7L28.9 21.7L27.2 20.5L25.5 21.7L26.1 19.7L24.4 18.4L26.5 18.4Z" opacity="0.9"/>
    <path d="M22.4 21.6L23.1 23.7L25.3 23.7L23.5 25L24.2 27.1L22.4 25.8L20.6 27.1L21.3 25L19.5 23.7L21.7 23.7Z"/>
  </g>
</svg><!--/@av1--></div>
    <div class="lab abs" style="width:191px;height:27px"><svg class="abs" style="left:2.6px;top:7.2px" width="16" height="18"><use href="#micon"/></svg><svg class="abs" style="left:23px;top:7.4px" width="18" height="17.6"><use href="#share"/></svg><span class="abs" style="left:43.5px;top:2.4px">李林昊_hebut正在...</span></div></div>
  <div class="tile abs" style="top:141px"><div class="av abs"><!--@av2--><svg width="62" height="62" viewBox="0 0 62 62">
  <defs>
    <filter id="a2b"><feGaussianBlur stdDeviation="0.85"/></filter>
    <filter id="a2c"><feGaussianBlur stdDeviation="2"/></filter>
    <pattern id="a2s" width="4" height="2.3" patternUnits="userSpaceOnUse" patternTransform="rotate(-8)"><rect width="4" height="2.3" fill="#cfccc5"/><rect width="4" height="1" fill="#4b4a4c"/></pattern>
  </defs>
  <rect width="62" height="62" fill="#3b3a2c"/>
  <g filter="url(#a2c)">
    <rect x="36" y="0" width="30" height="30" fill="#26180f"/>
    <rect x="0" y="0" width="26" height="26" fill="#42412f"/>
    <rect x="0" y="44" width="62" height="20" fill="#4a2f28"/>
  </g>
  <g filter="url(#a2b)">
    <!-- right items -->
    <path d="M43 8L56 6L58 10L44 12Z" fill="#2f6a3a"/>
    <path d="M44 20L56 15L62 20L62 35L50 34L43 27Z" fill="#d9cdc6"/>
    <path d="M45 24L62 27L62 31L46 28Z" fill="#c9553f"/>
    <path d="M40 10L43 10L43 36L41 36Z" fill="#20150f"/>
    <!-- chair -->
    <path d="M3 28L22 26L22 46L5 48Z" fill="#a63a2e"/>
    <path d="M7 32L18 31L18 43L8 44Z" fill="#3a3428"/>
    <path d="M36 28L41 28L42 40L36 40Z" fill="#a63a2e"/>
    <!-- body striped -->
    <path d="M20 30C14 33 8 42 4 50L9 56L20 50L40 50L44 44C43 36 39 31 34 29Z" fill="url(#a2s)"/>
    <!-- collar -->
    <path d="M21.6 26.6C24 31.6 31 32.4 34.4 28.6L34 26C30 29 25.6 28.4 22.6 24.6Z" fill="#4a3b1c"/>
    <!-- face -->
    <ellipse cx="30.4" cy="20.6" rx="8.6" ry="9.8" fill="#d9a88e" transform="rotate(-10 30.4 20.6)"/>
    <ellipse cx="24.4" cy="19" rx="1.6" ry="2.4" fill="#c99880"/>
    <!-- hair -->
    <path d="M21 17C19.6 9 25.6 4.6 31 5.2C37 5.8 41 10 39.6 18C37.6 14 34 12.4 30 13C26 13.4 23 14.4 21 17Z" fill="#75644f"/>
    <path d="M33 7C37 7 40.6 11 39 18C38 14 36.4 11.6 33 10.6Z" fill="#3e2f22"/>
    <circle cx="27" cy="19" r="0.7" fill="#3a2a22"/><circle cx="32.6" cy="18.2" r="0.7" fill="#3a2a22"/>
    <path d="M28.4 24.4L31.6 24L30 25.4Z" fill="#c0605a"/>
    <!-- arm and hand -->
    <path d="M9 47C14 44 22 43.6 29 44.4L30 48.6C22 48 16 49 10 52Z" fill="#d3a283"/>
    <path d="M33 42L39 42L39 47L33 47Z" fill="#c99478"/>
    <path d="M21 36L30 45" stroke="#3b2f22" stroke-width="0.6"/>
    <!-- table stuff -->
    <path d="M12 52L28 50L30 58L18 60Z" fill="#8c3c38"/>
    <path d="M29 53L41 52L43 61L31 62Z" fill="#d8cfc0"/>
    <path d="M40 51L47 50L48 58L42 59Z" fill="#9c9a2c"/>
    <rect x="30" y="46" width="2.4" height="5" fill="#d4b43a"/>
    <rect x="33.4" y="46.4" width="3" height="5" fill="#c5525a"/>
    <rect x="41" y="45" width="3" height="4" fill="#e6e6e0"/><rect x="45" y="45" width="3" height="4" fill="#cfd8d0"/><rect x="49" y="44" width="3" height="4.4" fill="#e6e6e0"/><rect x="53" y="44" width="2.6" height="4" fill="#dfe4d8"/>
    <rect x="24" y="57" width="7" height="5" fill="#2a3020"/>
    <path d="M44 50L56 48L56 56L47 58Z" fill="#26324c"/>
  </g>
</svg><!--/@av2--></div>
    <div class="lab abs" style="width:82px"><svg class="abs" style="left:2.4px;top:4.6px" width="17.2" height="21.5"><use href="#micoff"/></svg><span class="abs" style="left:24.6px">林春钊</span></div></div>
  <div class="tile abs" style="top:264px"><div class="av abs"><!--@av3--><svg width="62" height="62" viewBox="0 0 62 62">
  <defs><filter id="a3b"><feGaussianBlur stdDeviation="0.5"/></filter><filter id="a3c"><feGaussianBlur stdDeviation="1.4"/></filter></defs>
  <rect width="62" height="62" fill="#fdfefe"/>
  <g filter="url(#a3c)">
    <path d="M8 22C8 10 20 3 32 3C40 3 45 9 45 20C42 14 38 12 33 13C24 14 14 18 11 28Z" fill="#bfe3d6"/>
  </g>
  <g filter="url(#a3b)" fill="none" stroke="#53b795" stroke-width="0.6">
    <path d="M30 3C22 8 14 16 8 25"/><path d="M33 3C27 9 20 17 13 28"/><path d="M36 4C32 10 26 18 18 26" opacity="0.7"/>
    <path d="M38 4C41 10 43 17 42 24" /><path d="M42 7C45 13 45 20 43 27" opacity="0.8"/><path d="M34 4C38 9 39 14 38 20" opacity="0.6"/>
    <path d="M22 6C16 9 11 14 7 21" opacity="0.7"/>
    <path d="M47 24C49 24 50 25 50 26C52 24 54 25 54 27C56 25 58 26 58 28" stroke="#9ab8ac" stroke-width="0.5"/>
    <path d="M40 33C48 35 55 34 60 31" stroke="#b5d9cb" stroke-width="0.5"/>
  </g>
  <g filter="url(#a3b)">
    <!-- glasses -->
    <path d="M14.6 25.4L34.6 15.8L35.2 17.2L20 25.6L15.4 27Z" fill="#1fa676"/>
    <ellipse cx="29" cy="22" rx="6" ry="5" fill="none" stroke="#2aa97c" stroke-width="0.7" transform="rotate(-20 29 22)"/>
    <ellipse cx="17" cy="28" rx="3.4" ry="3" fill="none" stroke="#2aa97c" stroke-width="0.6"/>
    <path d="M26 18.6C28 17.4 31 17.2 33 18.4C31 19.6 28 20 26 18.6Z" fill="#1fa676"/>
    <!-- shirt -->
    <path d="M14.4 39L24.7 36L31 40.4L38 31L46 34.5L49.4 38L47 50L44.6 58.4L40 62L22 62L11 52.5L14 46Z" fill="#1fa676"/>
    <path d="M24.7 36C26 39.6 29 41.4 31 40.4C33 39 36 35 38 31L36.4 30.4C34 34.6 32 37.4 30.6 38.2C29 38.6 27 37.4 26 35.4Z" fill="#eafaf3"/>
    <path d="M11 52.5L16.6 49.2L18.8 51.4L13.2 54.8Z" fill="#e4f5ee"/>
    <path d="M12.4 55.2L18.6 52.4L19.8 54L14.6 57Z" fill="#d7efe5"/>
    <!-- arm right -->
    <path d="M49.4 38L52 39.4C50.6 43 52 46 56 47.4L54.6 49C50 48 48 44 49.4 38Z" fill="#1fa676"/>
    <path d="M47.6 40L48.8 39.6L48.4 47L47.2 47Z" fill="#c8eadc"/>
    <path d="M53 38.6C54 42 55 44 57 45.6" fill="none" stroke="#2aa97c" stroke-width="0.7"/>
    <!-- chest print -->
    <path d="M21.6 56.4C24 51.6 32 50.4 38.4 54.4" fill="none" stroke="#dff3ea" stroke-width="1.1" stroke-dasharray="1.2 0.7"/>
    <ellipse cx="30" cy="58" rx="3.8" ry="2.2" fill="#eaf8f1"/>
    <path d="M27.6 58H32.4" stroke="#1fa676" stroke-width="0.6"/>
  </g>
</svg><!--/@av3--></div>
    <div class="lab abs" style="width:82px"><svg class="abs" style="left:2.4px;top:4.6px" width="17.2" height="21.5"><use href="#micoff"/></svg><span class="abs" style="left:24.6px">林杰燊</span></div></div>
  <div class="tile abs" style="top:387px"><div class="av abs"><!--@av4--><svg width="62" height="62" viewBox="0 0 62 62">
  <defs><filter id="a4b"><feGaussianBlur stdDeviation="0.45"/></filter></defs>
  <rect width="62" height="62" fill="#fefefe"/>
  <g filter="url(#a4b)">
    <!-- doodles -->
    <path d="M11 8H13.4M11 10H13.4M11 12H13.4" stroke="#f5e3a0" stroke-width="0.8"/>
    <path d="M5 28L6.2 30.2L8.6 30.4L6.8 32L7.4 34.4L5 33.2L2.8 34.4L3.4 32L1.6 30.4L4 30.2Z" fill="#f7e6a6"/>
    <path d="M50 33.6C53 34 55 36 54.6 39.6M55 36L57 37.6" fill="none" stroke="#f2d98a" stroke-width="1.2"/>
    <!-- sleeves -->
    <path d="M2 44C6 46 10 49 13 48C15 44 19 41.4 23 40L24 44L19 60L8 56Z" fill="#5a6fa9"/>
    <path d="M39 40C45 40.4 51 42 54 46L58 52L50 58L45 60Z" fill="#5a6fa9"/>
    <path d="M2 44C4 42 6 43 7 45C9 44 11 45 12 48L10 54L4 50Z" fill="#51639c"/>
    <!-- body -->
    <path d="M23 40L28 37.6L36 37.6L41 40L45.4 50L45.6 62L18.6 62L19.6 50Z" fill="#f1f1f4"/>
    <path d="M24 39.6C27 37.6 30 37.2 32.4 38L32.4 42C29 41 26 41.4 23 43Z" fill="#8d9cc6"/>
    <path d="M32.4 38C35 37.2 38 37.6 41 39.6L42 43C39 41.4 36 41 32.4 42Z" fill="#8d9cc6"/>
    <path d="M29 38.6H36V41H29Z" fill="#26262b"/>
    <path d="M31.6 41V62" stroke="#c9cbd6" stroke-width="0.8"/>
    <!-- neck -->
    <path d="M28.4 33H36.6V39H28.4Z" fill="#fbeedd"/>
    <path d="M28.4 33V38.4M36.6 33V38.4" stroke="#c62a2e" stroke-width="0.7"/>
    <!-- face -->
    <path d="M20.6 17C20.6 12 26 9 32.6 9C40 9 45.4 13 45.4 19.6C47.6 19.4 48.6 22 47.4 24.4C46.6 26 45.4 26.4 44.6 26C43 31 38.4 35.2 33.4 35.2C27 35.2 20.6 29 20.6 21Z" fill="#fcefdf"/>
    <path d="M20.8 18C20.4 26 26 35 33.4 35.2C38.4 35.2 43 31 44.6 26C46 26.6 47.8 25 47.8 22.6C47.8 20.6 46.6 19.4 45.4 19.6" fill="none" stroke="#c62a2e" stroke-width="0.7"/>
    <ellipse cx="24.8" cy="26.6" rx="3.4" ry="2.6" fill="#f7a6a6"/>
    <ellipse cx="40.4" cy="26.6" rx="3.2" ry="2.5" fill="#f7a6a6"/>
    <ellipse cx="25.6" cy="21" rx="1.4" ry="1.8" fill="#121214"/>
    <ellipse cx="36.8" cy="21" rx="1.5" ry="1.8" fill="#121214"/>
    <path d="M23.4 19.4L28 19.8M34.6 19.8L39.4 19.4" stroke="#121214" stroke-width="0.8"/>
    <path d="M29.6 28C31.6 26.6 34.4 26 36.4 26.4C35.6 29.4 32 30.4 29.6 28Z" fill="#e98d8d" stroke="#b8363a" stroke-width="0.5"/>
    <!-- hair -->
    <path d="M17.6 14C16 8 22 2 28 1.4C30 -0.4 36 -0.6 39 1C44 1.4 49.6 6 50.6 12C51.4 16 50 19.6 48 20.4C47.6 18 46.6 16 44.6 15C45.4 18 44.6 20 43.6 21.4C42 17 39 13.6 35 11.4C34.4 13.6 33 15 31 15.6C31.4 13.6 31 12 30 11C28.4 14 25 16.6 21.6 17.6C21.4 19.6 21 21.4 20.6 22.6C19 20.6 18 17.6 17.6 14Z" fill="#2b2b30"/>
    <!-- signature -->
    <path d="M24 51C22 51.4 21.4 55 23.6 55.6C25 55.6 26 54.6 26.4 53.6M27 50.6L27.6 55M29 52.4L29.6 55.4M30.4 52.6C31 54 32 54.6 33 53.4C33.6 52.4 34.4 52.6 34.6 54M35.4 50.6L35.8 55M36 53L38 51.6M36.2 53.2L38.2 54.8M39 52.6C40 52 41 52.6 40.8 54C40.6 55.4 39.4 55.6 39 54.6C40 56 40.6 57.6 39.4 58.6" fill="none" stroke="#2a2a2e" stroke-width="0.75"/>
  </g>
</svg><!--/@av4--></div>
    <div class="lab abs" style="width:92px"><svg class="abs" style="left:2.4px;top:4.6px" width="17.2" height="21.5"><use href="#micoff"/></svg><span class="abs" style="left:24.6px">A何文伟</span></div></div>
  <div class="tile abs" style="top:509px"><div class="av abs"><!--@av5--><svg width="62" height="62" viewBox="0 0 62 62">
  <defs><filter id="a5b"><feGaussianBlur stdDeviation="0.6"/></filter><filter id="a5c"><feGaussianBlur stdDeviation="1.6"/></filter></defs>
  <rect width="62" height="62" fill="#f6f6f8"/>
  <g filter="url(#a5c)">
    <path d="M8 36L30 34L42 50L40 62L14 62L8 50Z" fill="#d3dde6"/>
    <path d="M14 40L26 44L30 62L18 62Z" fill="#eef1f4"/>
    <path d="M30 30L46 30L48 46L38 50Z" fill="#c5d6e2"/>
  </g>
  <g filter="url(#a5b)">
    <!-- long hair strands -->
    <path d="M25 10C18 18 14 26 10 36C8 40 6 43 4.6 45" fill="none" stroke="#3a3c48" stroke-width="1.1"/>
    <path d="M24 14C20 22 16 32 12 40C10 44 9 46 8 48" fill="none" stroke="#5a5d6a" stroke-width="0.8"/>
    <path d="M22 18C18 26 14 36 9 42" fill="none" stroke="#7d8290" stroke-width="0.6"/>
    <path d="M18 30C15 36 13 41 12 47" fill="none" stroke="#4a4c58" stroke-width="0.9"/>
    <!-- heads hair -->
    <path d="M24.6 14C24 8 28 4.6 32 5.4C34 4 38 5 40 7.6C44 6.4 49 9 50.6 14C52 19 50.6 25 48 28.6C47 24 45.6 21 43 19.6C43.6 23 43 26 41.6 28C40 24 38.6 21 37 19.6C36 22 34 24 31.6 25C31 22.6 30 20.6 28.6 19.6C27 21 26.4 23 26.4 25.4C24.4 22 24.4 18 24.6 14Z" fill="#25252f"/>
    <path d="M36 8C37.6 12 37.6 16 37 20" stroke="#5a5d70" stroke-width="0.5" fill="none"/>
    <!-- faces -->
    <path d="M31.6 21.6C33 19.6 36 19 37.6 20.4C38.6 23 38.6 27 37 30C35 31 32.6 30 31.6 28Z" fill="#ece4e0"/>
    <path d="M41 22C43 21 46 22 47.4 24.6C47.6 28 46 31.4 43.6 33C41.6 32 40.6 29 41 26Z" fill="#e8dfdc"/>
    <path d="M37.6 30C38.6 31.6 40 32.6 41.6 32.6L40.6 36L37 35Z" fill="#d9cfd0"/>
    <!-- hair ornaments -->
    <path d="M23 6C25 4.4 28 4 30 5.4L31.6 9L29 11L26 15.4L23.6 16L24.6 11Z" fill="#4a4650"/>
    <path d="M26 7.6C28 6.4 30.6 6.6 32 8L30 10.6C28.6 9.6 27 9.6 25.6 10.6Z" fill="#b23a22"/>
    <path d="M21 14L26 13L25.6 15.6L22 17Z" fill="#b8452a"/>
    <ellipse cx="44.4" cy="7.6" rx="3.6" ry="2.8" fill="#a9c3d4"/>
    <ellipse cx="43" cy="6.6" rx="1.6" ry="1.2" fill="#5a7488"/>
    <!-- dark sleeves -->
    <path d="M14.8 25.4C17 22.6 22 21 26 23C30 26 38 34 43 40L43.4 49.6C39 49 35 47.6 32 45.6C26 41 19 36 15.4 33.4C13.6 31 13.6 27.6 14.8 25.4Z" fill="#3a3029"/>
    <path d="M43.6 31C48 31.4 54 34 59.6 38.6L60 45.6L54 46C50 45.6 46 45 43.6 44Z" fill="#40352d"/>
    <path d="M20 25C26 27 34 35 41 42" fill="none" stroke="#5a4a3e" stroke-width="0.7"/>
    <!-- hand -->
    <path d="M38 49.6C40 48.6 42.6 49 43.6 51L43.6 57C41.6 57.6 39 56.6 38 55Z" fill="#eadfd6"/>
    <!-- flag badge -->
    <path d="M43.6 46.4C47 44.6 53 44.4 58.6 46L58.6 52C56 56 50 59.6 44.6 60.4C43.6 56 43.4 51 43.6 46.4Z" fill="#fbfbfb"/>
    <path d="M45.2 47.6C48 46.4 53 46.2 58 47.4L57.4 52C54.6 55.6 50 58.4 45.8 59C45.2 55 45 51 45.2 47.6Z" fill="#e0211f"/>
    <path d="M47.8 49.6L48.5 51.6L50.6 51.6L48.9 52.9L49.5 54.9L47.8 53.7L46.1 54.9L46.7 52.9L45 51.6L47.1 51.6Z" fill="#f8d520"/>
    <circle cx="51.6" cy="48.6" r="0.5" fill="#f8d520"/><circle cx="53" cy="50.2" r="0.5" fill="#f8d520"/><circle cx="52.8" cy="52.4" r="0.5" fill="#f8d520"/>
  </g>
</svg><!--/@av5--></div>
    <div class="lab abs" style="width:82px"><svg class="abs" style="left:2.4px;top:4.6px" width="17.2" height="21.5"><use href="#micoff"/></svg><span class="abs" style="left:24.6px">方序谦</span></div></div>
  <div class="tile abs" style="top:632px"><div class="av abs"><!--@av6--><svg width="62" height="62" viewBox="0 0 62 62">
  <defs><filter id="a6b"><feGaussianBlur stdDeviation="0.6"/></filter><filter id="a6c"><feGaussianBlur stdDeviation="2.2"/></filter>
  <radialGradient id="a6f" cx="0.45" cy="0.4" r="0.65"><stop offset="0" stop-color="#965a44"/><stop offset="0.6" stop-color="#7b4233"/><stop offset="1" stop-color="#532a22"/></radialGradient></defs>
  <rect width="62" height="62" fill="#1d1d29"/>
  <g filter="url(#a6c)"><ellipse cx="44" cy="22" rx="12" ry="20" fill="#23232f"/><ellipse cx="10" cy="24" rx="8" ry="16" fill="#181822"/></g>
  <g filter="url(#a6b)">
    <!-- shirt -->
    <path d="M4 47.6L15.7 43.5C18 44 21 47 24.7 49C29 49 34 46 38 42.6L56.6 49.4L50 58L31 63L16 60Z" fill="#d9cdb9"/>
    <path d="M14 45C15.6 50 20 53.6 25 54C30 54 34 50 37 44L34.6 43C32 47.6 29 50.6 25 50.6C21.6 50.4 18 48 16 44Z" fill="#2c211e"/>
    <!-- neck -->
    <path d="M16.6 38L34.6 38L35 45C32 49 29 51.4 25 51.4C21 51.4 18 49 16 45Z" fill="#6b3a2c"/>
    <path d="M17.6 50C20 52.6 23 53.6 26 53" fill="none" stroke="#c84a4a" stroke-width="0.9"/>
    <path d="M19 48.4C21 50.6 23.6 51 25.6 50.4" fill="none" stroke="#c9a24a" stroke-width="0.8"/>
    <!-- face -->
    <path d="M13 24C13 16 18 12 25.6 12C33.6 12 38.6 16.6 38.6 24C38.6 33 33.6 43.6 25.6 43.6C18 43.6 13 33 13 24Z" fill="url(#a6f)"/>
    <ellipse cx="12.6" cy="27.6" rx="1.8" ry="3" fill="#74402f"/><ellipse cx="38.8" cy="28" rx="1.6" ry="3" fill="#683727"/>
    <path d="M18 40C21 43.4 30 43.6 33.6 39.6C31 42 28 42.6 25.6 42.4C22.6 42.4 20 41.6 18 40Z" fill="#2a1814"/>
    <path d="M20.6 31.2C23.6 30 28 30 31 31.4C29.6 34.6 22.4 34.6 20.6 31.2Z" fill="#3c1d19"/>
    <path d="M22 31.4C24.6 30.8 27.6 30.8 30 31.6L29.4 33C27 33.6 24.6 33.6 22.6 33Z" fill="#f1ede9"/>
    <path d="M23.4 24.6C24.6 26.4 27 26.4 28.4 24.8" fill="none" stroke="#4a2419" stroke-width="0.8"/>
    <!-- hair -->
    <path d="M11.6 20C10 12 14 4 20 2C22 0 26 0.4 27.6 1C31 -0.6 36 1.4 38 4.6C41.6 7 42 13 40.6 19C39 15.6 36 13.4 32.6 12.6C28 11.6 22 11.8 18 13.4C14.6 14.8 12.6 17 11.6 20Z" fill="#ea7d8f"/>
    <path d="M18 5C21 2.6 26 2 29 3.6C27 5.6 22 6.6 18 5Z" fill="#f0a07a" opacity="0.8"/>
    <path d="M29 4C33 3.6 37 6 38.6 10C36 8.6 32 7.6 29 4Z" fill="#ee9477" opacity="0.8"/>
    <path d="M13 10C15 7 18 6 20 6.6" fill="none" stroke="#d75e7a" stroke-width="1"/>
    <!-- heart glasses -->
    <path d="M19.7 24.6C16 22.6 13.6 19.6 14.4 17.2C15.2 15 18.4 15 19.7 17.4C21 15 24.2 15 25 17.2C25.8 19.6 23.4 22.6 19.7 24.6Z" fill="#f36db4"/>
    <path d="M19.7 22.6C17.2 21.2 15.6 19.2 16.2 17.8C16.8 16.6 18.8 16.8 19.7 18.8C20.6 16.8 22.6 16.6 23.2 17.8C23.8 19.2 22.2 21.2 19.7 22.6Z" fill="#3b2b32"/>
    <path d="M32.3 25.6C28.6 23.6 26.2 20.6 27 18.2C27.8 16 31 16 32.3 18.4C33.6 16 36.8 16 37.6 18.2C38.4 20.6 36 23.6 32.3 25.6Z" fill="#f36db4"/>
    <path d="M32.3 23.6C29.8 22.2 28.2 20.2 28.8 18.8C29.4 17.6 31.4 17.8 32.3 19.8C33.2 17.8 35.2 17.6 35.8 18.8C36.4 20.2 34.8 22.2 32.3 23.6Z" fill="#3b2b32"/>
    <path d="M24.6 17.6H27.4" stroke="#f36db4" stroke-width="1.2"/>
    <path d="M35 13.4L35.9 16.1L38.6 17L35.9 17.9L35 20.6L34.1 17.9L31.4 17L34.1 16.1Z" fill="#fff"/>
    <!-- red heart -->
    <path d="M46.6 61C41 57.6 38.4 53.4 39.6 50.4C40.8 47.6 45 48 46.4 51C48.6 48 52.6 48.6 53 51.6C53.4 55 50.6 58.6 46.6 61Z" fill="#f23a22"/>
    <path d="M41.4 50.6C42.4 49.6 43.8 49.6 44.8 50.6" fill="none" stroke="#f9907a" stroke-width="0.8"/>
  </g>
</svg><!--/@av6--></div>
    <div class="lab abs" style="left:27px;width:84px;height:27px"><svg class="abs" style="left:4.4px;top:4.8px" width="17.2" height="21.5"><use href="#micoff"/></svg><span class="abs" style="left:26.6px">邹林华</span></div>
    <div class="abs" style="left:0;bottom:0;width:27px;height:27px;background:#ff8518;box-shadow:0 2.5px 0 -0.0px #5f6368, 0 3px 0 0 #c9761f"><svg class="abs" style="left:0;top:0" width="27" height="27"><use href="#host"/></svg></div></div>
</div>
<div id="frame" class="abs"></div>
</body>
</html>
